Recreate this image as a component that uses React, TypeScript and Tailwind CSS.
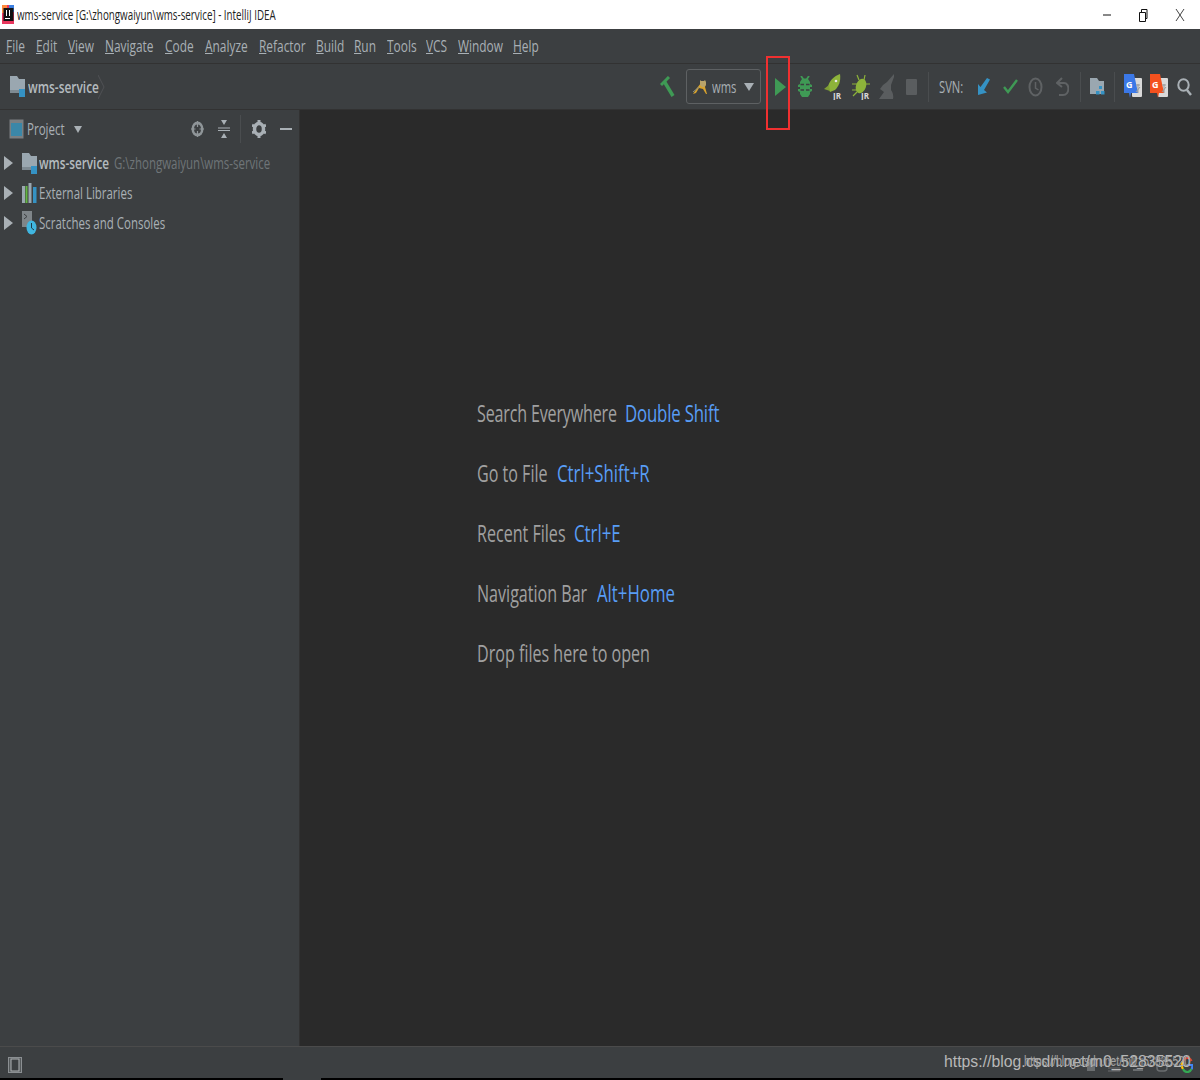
import * as React from "react";

const FONT = "font-['Open_Sans','Noto_Sans',sans-serif]";

const menus: [string, string, number][] = [
  ["F", "ile", 19],
  ["E", "dit", 21],
  ["V", "iew", 26],
  ["N", "avigate", 49],
  ["C", "ode", 29],
  ["A", "nalyze", 43],
  ["R", "efactor", 46],
  ["B", "uild", 27],
  ["R", "un", 22],
  ["T", "ools", 28],
  ["V", "CS", 21],
  ["W", "indow", 44],
  ["H", "elp", 25],
];

type SqueezedProps = {
  width: number;
  narrow?: boolean;
  className?: string;
  children: React.ReactNode;
};

// the screenshot is squashed sideways, so text is narrowed with a transform
function Squeezed({ width, narrow, className, children }: SqueezedProps) {
  return (
    <span className={`inline-block shrink-0 ${className ?? ""}`} style={{ width }}>
      <span className={`inline-block origin-left whitespace-nowrap ${narrow ? "scale-x-[0.67]" : "scale-x-[0.7]"}`}>{children}</span>
    </span>
  );
}

function FolderIcon() {
  return (
    <svg width="15" height="21" viewBox="0 0 15 21" className="shrink-0">
      <path d="M0 0h7l2 3h6v11H0z" fill="#9aa7b0" />
      <path d="M0 14h9v3H0z" fill="#7e8a92" />
      <rect x="9" y="13" width="6" height="8" fill="#3592c4" />
    </svg>
  );
}

function TreeArrow() {
  return (
    <svg width="9" height="14" viewBox="0 0 9 14" className="shrink-0">
      <path d="M0 0l9 7-9 7z" fill="#a9b0b5" />
    </svg>
  );
}

function Divider() {
  return <div className="h-[30px] w-px bg-[#4a4d4f]" />;
}

function TreeRow({ icon, children }: { icon: React.ReactNode; children: React.ReactNode }) {
  return (
    <div className="flex h-[30px] items-center pl-1">
      <TreeArrow />
      <div className="ml-[8px] flex w-[17px] shrink-0 justify-center">{icon}</div>
      <div className="ml-[1px] flex items-center">{children}</div>
    </div>
  );
}

type HintProps = {
  label: string;
  labelWidth: number;
  keys?: string;
  tight?: boolean;
};

function Hint({ label, labelWidth, keys, tight }: HintProps) {
  return (
    <div className={`flex h-[60px] items-center text-[24px] ${tight ? "tracking-[-0.25px]" : ""}`}>
      <Squeezed width={labelWidth} narrow className="text-[#a0a0a0]">
        {label}
      </Squeezed>
      {keys ? <Squeezed width={120} className="text-[#589df6]">{keys}</Squeezed> : null}
    </div>
  );
}

export default function App() {
  return (
    <div className={`relative flex h-[1080px] w-[1200px] flex-col overflow-hidden bg-black ${FONT}`}>
      {/* title bar */}
      <div className="flex h-[29px] shrink-0 items-center bg-white text-[14px] text-[#222]">
        <svg width="12" height="19" viewBox="0 0 12 19" className="ml-[2px] shrink-0">
          <rect width="12" height="19" fill="#e8365d" />
          <rect x="0" y="0" width="5" height="8" fill="#ff8a3c" />
          <rect x="7" y="0" width="5" height="7" fill="#3b7fe0" />
          <rect x="1.500" y="3" width="10" height="13" fill="#111" />
          <rect x="3" y="13" width="5" height="1" fill="#fff" />
          <rect x="4" y="5" width="1" height="6" fill="#fff" />
          <rect x="7" y="5" width="1" height="6" fill="#fff" />
        </svg>
        <div className="ml-[3px] flex-1">
          <Squeezed width={270}>wms-service [G:\zhongwaiyun\wms-service] - IntelliJ IDEA</Squeezed>
        </div>
        <svg width="100" height="14" viewBox="0 0 100 14" className="shrink-0">
          <path d="M3 7h8" stroke="#111" strokeWidth="1" fill="none" />
          <path d="M39.500 4.500h6v9h-6zM41.500 4.500v-3h5.500v9h-1.500" stroke="#111" strokeWidth="1" fill="none" />
          <path d="M76 1l8 12M84 1l-8 12" stroke="#444" strokeWidth="1" fill="none" />
        </svg>
      </div>

      {/* menu bar */}
      <div className="flex h-[35px] shrink-0 items-center gap-[11px] border-b border-[#323232] bg-[#3c3f41] pl-[6px] text-[17px] text-[#a9b0b5]">
        {menus.map(([key, rest, width]) => (
          <Squeezed key={key + rest} width={width}>
            <span className="underline">{key}</span>
            {rest}
          </Squeezed>
        ))}
      </div>

      {/* nav bar and toolbar */}
      <div className="flex h-[46px] shrink-0 items-center border-b border-[#323232] bg-[#3c3f41]">
        <div className="ml-[10px]">
          <FolderIcon />
        </div>
        <Squeezed width={70} className="ml-[3px] text-[17px] font-semibold text-[#b4bbbf]">
          wms-service
        </Squeezed>
        <svg width="8" height="26" viewBox="0 0 8 26" className="shrink-0">
          <path d="M0 1l6 12-6 12" stroke="#4f5254" fill="none" />
        </svg>

        <div className="flex-1" />

        {/* build */}
        <svg width="15" height="21" viewBox="0 0 15 21" className="mr-[11px] shrink-0">
          <path d="M9 1L1 9" stroke="#3f9a55" strokeWidth="3" fill="none" />
          <path d="M4 5l9 15" stroke="#3f9a55" strokeWidth="3.500" fill="none" />
        </svg>

        {/* run config */}
        <div className="flex h-[35px] w-[75px] shrink-0 items-center rounded-[3px] border border-[#5e6163] pl-[6px] text-[16px] text-[#a9b0b5]">
          <svg width="15" height="16" viewBox="0 0 15 16" className="shrink-0">
            <path d="M0 15l3-1 3-5 4 1 3 5h1l-2-7 1-3-5-1-4 5z" fill="#d7a22e" />
            <path d="M7 1l1 1h3l1-1 1 2v3l-2 2H9L7 6z" fill="#b9a36a" />
            <path d="M0 13l6-5" stroke="#8a8f80" fill="none" />
          </svg>
          <Squeezed width={29} className="ml-[4px]">wms</Squeezed>
          <svg width="10" height="8" viewBox="0 0 10 8" className="ml-[3px] shrink-0">
            <path d="M0 0h10L5 8z" fill="#a9b0b5" />
          </svg>
        </div>

        {/* run */}
        <svg width="11" height="18" viewBox="0 0 11 18" className="ml-[14px] shrink-0">
          <path d="M0 0l11 9-11 9z" fill="#3f9a55" />
        </svg>

        {/* debug */}
        <svg width="14" height="21" viewBox="0 0 14 21" className="ml-[12px] shrink-0">
          <path d="M3 0l2.500 3.500h3L11 0" stroke="#3f9a55" strokeWidth="1.800" fill="none" />
          <path d="M4 3h6l2 3v2l2 1v2h-2v2h2v2l-2 1v2l-2 3H4l-2-3v-2l-2-1v-2h2v-2H0V9l2-1V6z" fill="#3f9a55" />
          <path d="M2.500 8.500h3.500M8 8.500h3.500M2.500 14h3.500M8 14h3.500" stroke="#3c3f41" strokeWidth="1.600" />
        </svg>

        {/* jrebel run */}
        <svg width="18" height="26" viewBox="0 0 18 26" className="ml-[12px] shrink-0">
          <path d="M16 0c1 7-1 12-5 16l-5 2-2-5C5 7 10 2 16 0z" fill="#8db33a" />
          <path d="M0 15l5-4 1 6z" fill="#7f9f35" />
          <circle cx="12" cy="7" r="1.300" fill="#e8e8e8" />
          <text x="9" y="25" fontSize="8" fontWeight="700" fill="#d8d8d8" fontFamily="Open Sans" textLength="8" lengthAdjust="spacingAndGlyphs">JR</text>
        </svg>

        {/* jrebel debug */}
        <svg width="18" height="26" viewBox="0 0 18 26" className="ml-[10px] shrink-0">
          <ellipse cx="9" cy="12" rx="5" ry="7.500" transform="rotate(20 9 12)" fill="#8db33a" />
          <path d="M5 1l2 5M13 1l-1 5M0 10h5M13 10h5M0 16h5M1 22l4-4" stroke="#8db33a" strokeWidth="1.200" fill="none" />
          <text x="9" y="25" fontSize="8" fontWeight="700" fill="#d8d8d8" fontFamily="Open Sans" textLength="8" lengthAdjust="spacingAndGlyphs">JR</text>
        </svg>

        {/* attach, disabled */}
        <svg width="16" height="25" viewBox="0 0 16 25" className="ml-[8px] shrink-0">
          <path d="M16 0L9 8l-4 3-3 4 4 3-5 7h14q1-5-2-9v-5l3-8z" fill="#5a5d5f" />
        </svg>

        {/* stop, disabled */}
        <div className="ml-[12px] h-[16px] w-[11px] shrink-0 rounded-[1px] bg-[#5a5d5f]" />

        <div className="ml-[11px]">
          <Divider />
        </div>

        <Squeezed width={28} className="ml-[10px] text-[16px] text-[#a9b0b5]">SVN:</Squeezed>

        {/* svn update */}
        <svg width="14" height="18" viewBox="0 0 14 18" className="ml-[10px] shrink-0">
          <path d="M10 0l3 1.500L7 12l3 2.500L1 17V6l2.500 3z" fill="#3592c4" />
        </svg>

        {/* svn commit */}
        <svg width="15" height="15" viewBox="0 0 15 15" className="ml-[12px] shrink-0">
          <path d="M1 8l4 5 9-12" stroke="#3f9a55" strokeWidth="2.400" fill="none" />
        </svg>

        {/* history */}
        <svg width="15" height="20" viewBox="0 0 15 20" className="ml-[10px] shrink-0">
          <ellipse cx="7.500" cy="10" rx="6" ry="8.500" stroke="#5f6264" strokeWidth="2" fill="none" />
          <path d="M7.500 5v6l3 2" stroke="#5f6264" strokeWidth="1.500" fill="none" />
        </svg>

        {/* revert */}
        <svg width="13" height="20" viewBox="0 0 13 20" className="ml-[13px] shrink-0">
          <path d="M6 1L1 6l5 4M2 6h6c6 0 6 12-1 12H3" stroke="#5f6264" strokeWidth="2" fill="none" />
        </svg>

        <div className="ml-[11px]">
          <Divider />
        </div>

        {/* project structure */}
        <svg width="15" height="19" viewBox="0 0 15 19" className="ml-[9px] shrink-0">
          <path d="M0 1h7l2 3h5v13H0z" fill="#9aa7b0" />
          <rect x="9" y="9" width="3" height="3" fill="#3592c4" />
          <rect x="6" y="14" width="3.500" height="3.500" fill="#3592c4" />
          <rect x="11" y="14" width="3.500" height="3.500" fill="#3592c4" />
        </svg>

        <div className="ml-[9px]">
          <Divider />
        </div>

        {/* translate icons */}
        <svg width="18" height="25" viewBox="0 0 18 25" className="ml-[9px] shrink-0">
          <rect x="8" y="4" width="10" height="19" rx="1" fill="#d9d9d9" />
          <path d="M0 0h10l4 19H7l-1 5-1-5H0z" fill="#3b78e7" />
          <text x="2" y="14" fontSize="9" fontWeight="700" fill="#fff" fontFamily="Open Sans">G</text>
          <path d="M12 11h4M14 10v9M12 18l4-5" stroke="#999" fill="none" />
        </svg>
        <svg width="18" height="25" viewBox="0 0 18 25" className="ml-[8px] shrink-0">
          <rect x="8" y="4" width="10" height="19" rx="1" fill="#d9d9d9" />
          <path d="M0 0h10l4 19H9l-1 5-1-5H0z" fill="#f4511e" />
          <text x="2" y="14" fontSize="9" fontWeight="700" fill="#fff" fontFamily="Open Sans">G</text>
          <path d="M12 11h4M14 10v9M12 18l4-5" stroke="#999" fill="none" />
        </svg>

        {/* search */}
        <svg width="15" height="18" viewBox="0 0 15 18" className="ml-[9px] mr-[8px] shrink-0">
          <ellipse cx="6.500" cy="7" rx="5.200" ry="5.800" stroke="#a9b0b5" strokeWidth="2" fill="none" />
          <path d="M10 12l4 5" stroke="#a9b0b5" strokeWidth="2.400" fill="none" />
        </svg>
      </div>

      {/* main */}
      <div className="flex min-h-0 flex-1">
        <div className="flex w-[300px] shrink-0 flex-col border-r border-[#323232] bg-[#3c3f41]">
          <div className="flex h-[38px] shrink-0 items-center pl-[9px] text-[16.500px] text-[#a9b0b5]">
            <svg width="15" height="20" viewBox="0 0 15 20" className="shrink-0">
              <rect x="0.500" y="0.500" width="14" height="19" fill="#7a7f82" />
              <rect x="2" y="4" width="11" height="13" fill="#3b87a8" />
            </svg>
            <Squeezed width={47} className="ml-[3px]">Project</Squeezed>
            <svg width="8" height="7" viewBox="0 0 8 7" className="shrink-0">
              <path d="M0 0h8L4 7z" fill="#a9b0b5" />
            </svg>
            <svg width="13" height="16" viewBox="0 0 13 16" className="ml-[109px] shrink-0">
              <ellipse cx="6.500" cy="8" rx="6" ry="7.500" fill="#8f9598" />
              <ellipse cx="6.500" cy="8" rx="3.500" ry="4.500" fill="#3c3f41" />
              <path d="M6.500 0v6M6.500 10v6M0 8h4.500M8.500 8H13" stroke="#8f9598" strokeWidth="1.200" />
            </svg>
            <svg width="12" height="20" viewBox="0 0 12 20" className="ml-[14px] shrink-0">
              <path d="M0 9h12M0 11.500h12" stroke="#a9b0b5" strokeWidth="1.200" />
              <path d="M3 1h6L6 6zM3 19h6l-3-5z" fill="#a9b0b5" />
            </svg>
            <div className="ml-[10px] h-[28px] w-px bg-[#4a4d4f]" />
            <svg width="14" height="18" viewBox="0 0 14 18" className="ml-[11px] shrink-0">
              <ellipse cx="7" cy="9" rx="4.500" ry="5.500" fill="none" stroke="#a9b0b5" strokeWidth="3.500" />
              <path d="M7 0v3M7 15v3M0 5l2.500 1.500M14 5l-2.500 1.500M0 13l2.500-1.500M14 13l-2.500-1.500" stroke="#a9b0b5" strokeWidth="3" />
            </svg>
            <div className="ml-[14px] h-[2.500px] w-[12px] bg-[#a9b0b5]" />
          </div>

          <div className="text-[16.400px] text-[#a9b0b5]">
            <TreeRow icon={<FolderIcon />}>
              <Squeezed width={75} className="text-[16.800px] font-semibold text-[#b4bbbf]">wms-service</Squeezed>
              <Squeezed width={160} className="text-[#6f7578]">G:\zhongwaiyun\wms-service</Squeezed>
            </TreeRow>
            <TreeRow
              icon={
                <svg width="15" height="20" viewBox="0 0 15 20">
                  <path d="M0 3h3v17H0z" fill="#9aa7b0" />
                  <path d="M3.500 3h2v17h-2z" fill="#62b543" />
                  <path d="M6.500 0h3v20h-3z" fill="#9aa7b0" />
                  <path d="M11 4h3.500v16H11z" fill="#3592c4" />
                </svg>
              }
            >
              <Squeezed width={100}>External Libraries</Squeezed>
            </TreeRow>
            <TreeRow
              icon={
                <svg width="15" height="24" viewBox="0 0 15 24">
                  <rect x="0" y="0" width="10" height="16" fill="#7f8589" />
                  <path d="M2 3l3 2.500L2 8" stroke="#3c3f41" strokeWidth="1" fill="none" />
                  <ellipse cx="9.500" cy="16.500" rx="5" ry="7" fill="#40b6e0" />
                  <path d="M9.500 12v5l2.500 2" stroke="#1d3c4a" strokeWidth="1" fill="none" />
                </svg>
              }
            >
              <Squeezed width={126}>Scratches and Consoles</Squeezed>
            </TreeRow>
          </div>
        </div>

        {/* editor placeholder */}
        <div className="min-w-0 flex-1 bg-[#2a2a2a] pl-[177px] pt-[273px]">
          <Hint label="Search Everywhere" labelWidth={148} keys="Double Shift" tight />
          <Hint label="Go to File" labelWidth={80} keys="Ctrl+Shift+R" />
          <Hint label="Recent Files" labelWidth={97} keys="Ctrl+E" />
          <Hint label="Navigation Bar" labelWidth={120} keys="Alt+Home" />
          <Hint label="Drop files here to open" labelWidth={180} />
        </div>
      </div>

      {/* status bar */}
      <div className="flex h-[32px] shrink-0 items-center border-t border-[#4b4b4b] bg-[#3c3f41] pl-[8px] pt-[4px]">
        <svg width="14" height="16" viewBox="0 0 14 16" className="shrink-0">
          <rect x="0.500" y="0.500" width="13" height="15" fill="#55595b" stroke="#8b8f92" />
          <rect x="3" y="2" width="8" height="12" fill="#3c3f41" stroke="#b0b4b6" />
        </svg>
        <div className="flex-1" />
        <div className="mr-[7px] flex items-center gap-[13px]">
          <div className="h-[12px] w-[8px] bg-[#6a6d6f]" />
          <svg width="12" height="14" viewBox="0 0 12 14" className="shrink-0">
            <path d="M0 2h12M0 6h12M0 10h12M0 13h12" stroke="#6a6d6f" fill="none" />
          </svg>
          <svg width="10" height="14" viewBox="0 0 10 14" className="shrink-0">
            <path d="M1 0h8v8H1zM0 12h10" stroke="#6a6d6f" strokeWidth="2" fill="none" />
          </svg>
          <svg width="12" height="14" viewBox="0 0 12 14" className="shrink-0">
            <rect x="1" y="1" width="10" height="12" rx="3" stroke="#6a6d6f" strokeWidth="1.500" fill="none" />
          </svg>
          {/* google logo */}
          <svg width="12" height="16" viewBox="0 0 12 16" className="shrink-0">
            <path d="M10.500 4A5 6.500 0 0 0 2 4" stroke="#ea4335" strokeWidth="2.200" fill="none" />
            <path d="M2 4a5 6.500 0 0 0 0 8" stroke="#fbbc05" strokeWidth="2.200" fill="none" />
            <path d="M2 12a5 6.500 0 0 0 8.500 0" stroke="#34a853" strokeWidth="2.200" fill="none" />
            <path d="M10.500 12c1-1 1-2.500 1-4H6" stroke="#4285f4" strokeWidth="2.200" fill="none" />
          </svg>
        </div>
      </div>
      <div className="flex h-[2px] shrink-0 bg-black pl-[283px]">
        <div className="h-full w-[38px] bg-[#3c3f41]" />
      </div>

      {/* marker drawn over the screenshot */}
      <div className="absolute left-[766px] top-[56px] h-[74px] w-[24px] border-2 border-[#f03030]" />

      {/* watermarks */}
      <div className="absolute left-[944px] top-[1050px] whitespace-nowrap font-['Liberation_Sans',sans-serif] text-[15.800px] text-[#b8b8b8]">
        https://blog.csdn.net/m0_52835520
      </div>
      <div className="absolute left-[1024px] top-[1051px] origin-left scale-x-[0.76] whitespace-nowrap font-['Liberation_Sans',sans-serif] text-[14px] text-[#a4a4a4]">
        https://blog.csdn.net/m0_52835520
      </div>
    </div>
  );
}
